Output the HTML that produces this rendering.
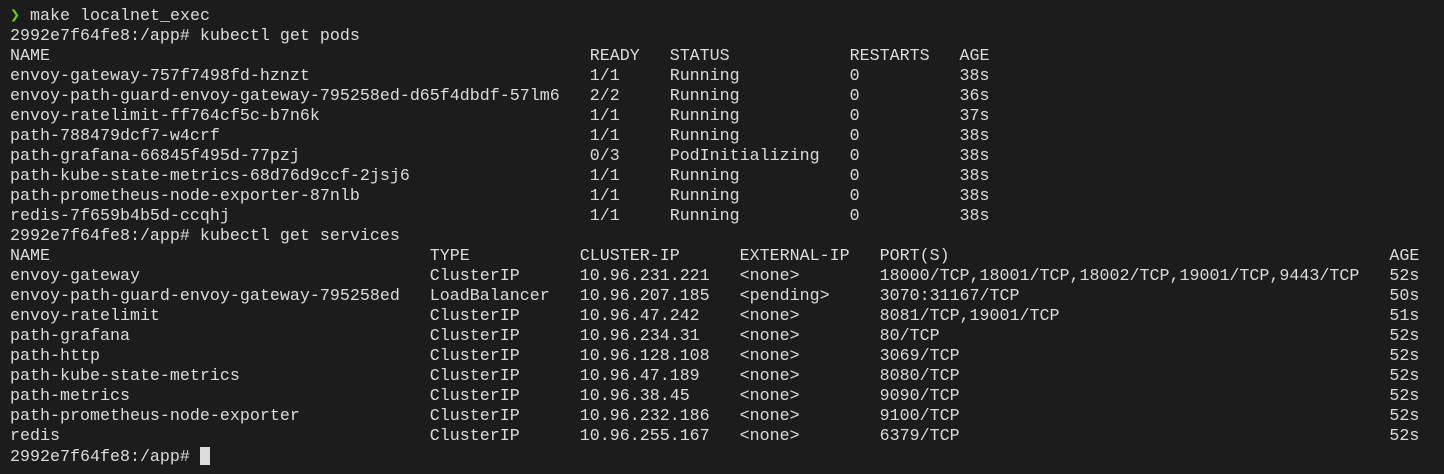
<!DOCTYPE html>
<html><head><style>
html,body{margin:0;padding:0;background:#1c1c1c;width:1444px;height:474px;overflow:hidden}
pre{margin:0;position:absolute;left:10px;top:7px;font-family:"Liberation Mono","DejaVu Sans Mono",monospace;font-size:16.67px;line-height:20px;color:#dcdcdc}
.g{color:#5fd700}
.c{display:inline-block;width:10px;height:18px;background:#dcdcdc;vertical-align:-4px}
</style></head><body><pre><span class="g">❯</span> make localnet_exec
2992e7f64fe8:/app# kubectl get pods
NAME                                                      READY   STATUS            RESTARTS   AGE
envoy-gateway-757f7498fd-hznzt                            1/1     Running           0          38s
envoy-path-guard-envoy-gateway-795258ed-d65f4dbdf-57lm6   2/2     Running           0          36s
envoy-ratelimit-ff764cf5c-b7n6k                           1/1     Running           0          37s
path-788479dcf7-w4crf                                     1/1     Running           0          38s
path-grafana-66845f495d-77pzj                             0/3     PodInitializing   0          38s
path-kube-state-metrics-68d76d9ccf-2jsj6                  1/1     Running           0          38s
path-prometheus-node-exporter-87nlb                       1/1     Running           0          38s
redis-7f659b4b5d-ccqhj                                    1/1     Running           0          38s
2992e7f64fe8:/app# kubectl get services
NAME                                      TYPE           CLUSTER-IP      EXTERNAL-IP   PORT(S)                                            AGE
envoy-gateway                             ClusterIP      10.96.231.221   &lt;none&gt;        18000/TCP,18001/TCP,18002/TCP,19001/TCP,9443/TCP   52s
envoy-path-guard-envoy-gateway-795258ed   LoadBalancer   10.96.207.185   &lt;pending&gt;     3070:31167/TCP                                     50s
envoy-ratelimit                           ClusterIP      10.96.47.242    &lt;none&gt;        8081/TCP,19001/TCP                                 51s
path-grafana                              ClusterIP      10.96.234.31    &lt;none&gt;        80/TCP                                             52s
path-http                                 ClusterIP      10.96.128.108   &lt;none&gt;        3069/TCP                                           52s
path-kube-state-metrics                   ClusterIP      10.96.47.189    &lt;none&gt;        8080/TCP                                           52s
path-metrics                              ClusterIP      10.96.38.45     &lt;none&gt;        9090/TCP                                           52s
path-prometheus-node-exporter             ClusterIP      10.96.232.186   &lt;none&gt;        9100/TCP                                           52s
redis                                     ClusterIP      10.96.255.167   &lt;none&gt;        6379/TCP                                           52s
2992e7f64fe8:/app# <span class="c"></span></pre></body></html>
